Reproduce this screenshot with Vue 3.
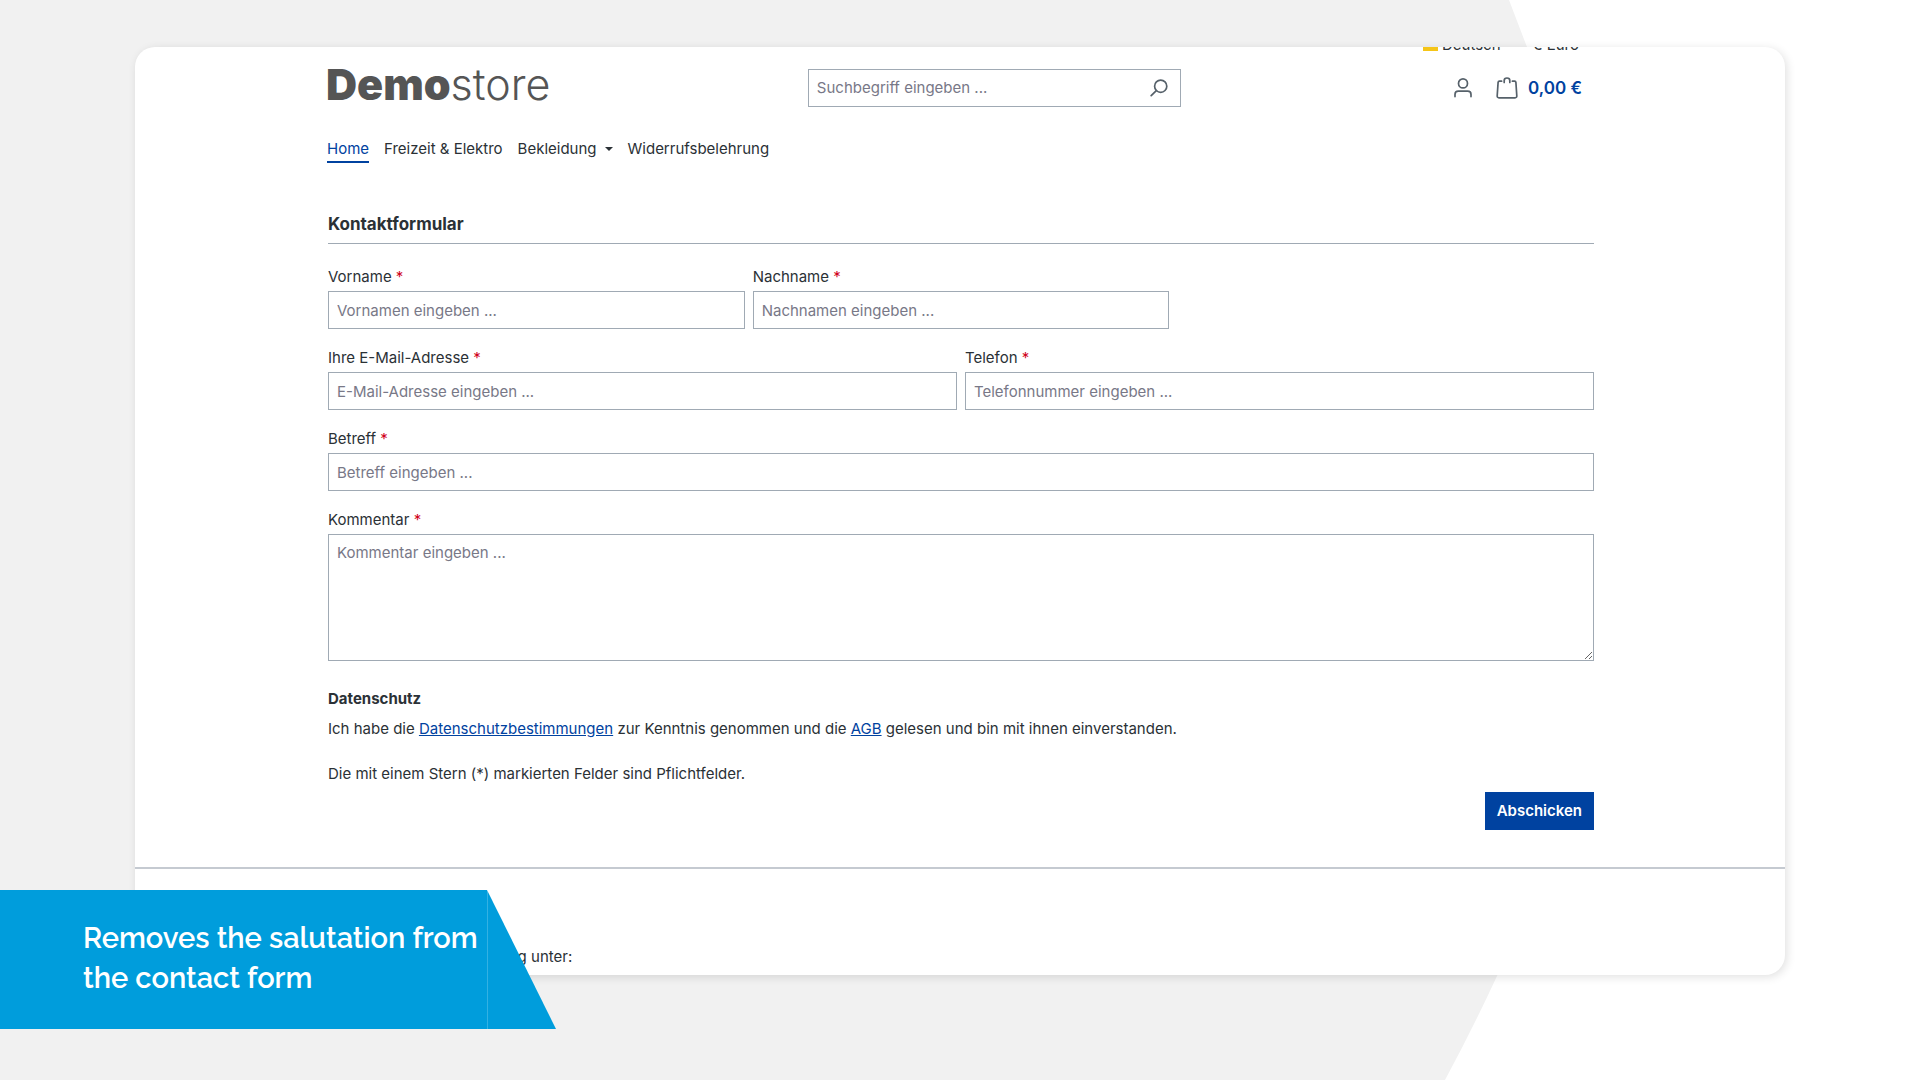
<script setup>
import { reactive } from 'vue';

const navItems = [
    { label: 'Home', active: true },
    { label: 'Freizeit & Elektro' },
    { label: 'Bekleidung', dropdown: true },
    { label: 'Widerrufsbelehrung' }
];

const fields = [
    { id: 'vorname', label: 'Vorname', type: 'text', size: 'third', placeholder: 'Vornamen eingeben ...' },
    { id: 'nachname', label: 'Nachname', type: 'text', size: 'third', placeholder: 'Nachnamen eingeben ...' },
    { id: 'email', label: 'Ihre E-Mail-Adresse', type: 'email', size: 'half', placeholder: 'E-Mail-Adresse eingeben ...' },
    { id: 'telefon', label: 'Telefon', type: 'tel', size: 'half', placeholder: 'Telefonnummer eingeben ...' },
    { id: 'betreff', label: 'Betreff', type: 'text', size: 'full', placeholder: 'Betreff eingeben ...' }
];

const form = reactive({
    vorname: '',
    nachname: '',
    email: '',
    telefon: '',
    betreff: '',
    kommentar: '',
    suche: ''
});
</script>

<template>
    <div class="page">
        <svg class="backdrop" viewBox="0 0 1920 1080" preserveAspectRatio="none" aria-hidden="true">
            <path d="M0 0H1509L1527 47L1620 300Q1680 480 1620 700Q1570 830 1497 976Q1473 1028 1445 1080H0Z" fill="#f1f1f1" />
        </svg>

        <div class="shop">
            <div class="container">
                <div class="top-bar">
                    <button type="button" class="top-bar-btn"><span class="flag"></span>Deutsch</button>
                    <button type="button" class="top-bar-btn">€ Euro</button>
                </div>

                <header class="header">
                    <a href="#" class="logo"><strong>Demo</strong>store</a>
                    <form class="search" @submit.prevent>
                        <input v-model="form.suche" type="search" aria-label="Suchbegriff" placeholder="Suchbegriff eingeben ...">
                        <button type="submit" aria-label="Suchen">
                            <svg width="18" height="18" viewBox="0 0 18 18" fill="none" stroke="#56616a" stroke-width="1.7" stroke-linecap="round">
                                <circle cx="10.7" cy="7.2" r="6.1" />
                                <path d="M6.3 11.6L1.2 16.7" />
                            </svg>
                        </button>
                    </form>
                    <div class="actions">
                        <button type="button" aria-label="Ihr Konto">
                            <svg width="18" height="20" viewBox="0 0 18 20" fill="none" stroke="#56616a" stroke-width="1.7" stroke-linecap="round">
                                <circle cx="9" cy="5.4" r="4.5" />
                                <path d="M1 18.6V16.4C1 14.4 2.4 13.2 4.4 13.2H13.6C15.6 13.2 17 14.4 17 16.4V18.6" />
                            </svg>
                        </button>
                        <a href="#" class="cart">
                            <svg width="22" height="22" viewBox="0 0 22 22" fill="none" stroke="#56616a" stroke-width="1.7" stroke-linecap="round" stroke-linejoin="round">
                                <path d="M5.6 4.2H3.4Q2.2 4.2 2.1 5.4L1.2 18.8Q1.1 20.8 3 20.8H19Q20.9 20.8 20.8 18.8L19.9 5.4Q19.8 4.2 18.6 4.2H16.4" />
                                <path d="M8.2 5.4V3.4Q8.2 1 11 1Q13.8 1 13.8 3.4V5.4" />
                            </svg>
                            <span>0,00 €</span>
                        </a>
                    </div>
                </header>

                <nav class="nav">
                    <a v-for="item in navItems" :key="item.label" href="#" :class="{ active: item.active }">
                        {{ item.label }}<span v-if="item.dropdown" class="caret"></span>
                    </a>
                </nav>

                <form class="contact" @submit.prevent>
                    <h1>Kontaktformular</h1>

                    <div class="fields">
                        <div v-for="field in fields" :key="field.id" class="field" :class="field.size">
                            <label :for="field.id">{{ field.label }} <span class="required">*</span></label>
                            <input :id="field.id" v-model="form[field.id]" :type="field.type" :placeholder="field.placeholder">
                        </div>
                        <div class="field full">
                            <label for="kommentar">Kommentar <span class="required">*</span></label>
                            <textarea id="kommentar" v-model="form.kommentar" placeholder="Kommentar eingeben ..."></textarea>
                        </div>
                    </div>

                    <h2>Datenschutz</h2>
                    <p>
                        Ich habe die <a href="#">Datenschutzbestimmungen</a> zur Kenntnis genommen und die
                        <a href="#">AGB</a> gelesen und bin mit ihnen einverstanden.
                    </p>
                    <p class="hint">Die mit einem Stern (*) markierten Felder sind Pflichtfelder.</p>
                    <div class="submit-row">
                        <button type="submit" class="btn-submit">Abschicken</button>
                    </div>
                </form>
            </div>

            <footer class="footer">
                <div class="container">Unterstützung und Beratung unter:</div>
            </footer>
        </div>

        <div class="banner">
            <p>Removes the salutation from<br>the contact form</p>
            <div class="banner-tip"></div>
        </div>
    </div>
</template>

<style>
body {
    margin: 0;
    background: #fff;
}
</style>

<style scoped>
.page {
    position: relative;
    box-sizing: border-box;
    min-height: 100vh;
    padding: 47px 135px 104px;
    overflow: hidden;
    font-family: Inter, "Liberation Sans", sans-serif;
    font-size: 15px;
    line-height: 24px;
    color: #2b3136;
}

.backdrop {
    position: absolute;
    inset: 0;
    width: 100%;
    height: 100%;
}

.shop {
    position: relative;
    overflow: hidden;
    border-radius: 20px;
    background: #fff;
    box-shadow: 2px 2px 10px rgba(0, 0, 0, 0.12);
}

.container {
    max-width: 1268px;
    margin: 0 auto;
}

button {
    padding: 0;
    border: none;
    background: none;
    font: inherit;
    color: inherit;
    cursor: pointer;
}

/* the shop is scrolled a little, so the top bar is cut off */
.top-bar {
    display: flex;
    justify-content: flex-end;
    gap: 32px;
    margin-top: -14px;
    padding-right: 15px;
}
.top-bar-btn {
    display: flex;
    align-items: center;
    gap: 4px;
    height: 24px;
}
.flag {
    width: 15px;
    height: 11px;
    background: linear-gradient(#000 33%, #d00 33%, #d00 66%, #f5c518 66%);
}

.header {
    display: grid;
    grid-template-columns: 38% 373px 1fr;
    align-items: center;
    height: 62px;
}

.logo {
    font-size: 43px;
    line-height: 56px;
    margin-top: -8px;
    font-weight: 300;
    color: #555;
    text-decoration: none;
}
.logo strong {
    font-weight: 900;
}

.search {
    display: flex;
    box-sizing: border-box;
    height: 38px;
    border: 1px solid #a0aab4;
}
.search input {
    flex: 1;
    min-width: 0;
    padding: 0 8px;
    border: none;
    outline: none;
    font: inherit;
}
.search button {
    display: flex;
    align-items: center;
    padding: 0 12px;
}

.actions {
    display: flex;
    justify-content: flex-end;
    align-items: center;
    gap: 24px;
    padding-right: 12px;
}
.actions button,
.cart {
    display: flex;
    align-items: center;
    gap: 10px;
}
.cart {
    font-size: 17px;
    font-weight: 600;
    color: #0042a0;
    text-decoration: none;
}

.nav {
    display: flex;
    gap: 15px;
    margin-top: 18px;
    padding-left: 1px;
}
.nav a {
    display: flex;
    align-items: center;
    height: 24px;
    border-bottom: 2px solid transparent;
    color: #2b3136;
    text-decoration: none;
}
.nav a.active {
    color: #0042a0;
    border-color: #0042a0;
}
.caret {
    margin-left: 8px;
    border: 4px solid transparent;
    border-top-color: #2b3136;
    border-bottom: none;
}

.contact {
    padding-left: 2px;
}

h1 {
    margin: 49px 0 21px;
    padding-bottom: 7px;
    border-bottom: 1px solid #a0aab4;
    font-size: 17px;
    line-height: 24px;
    font-weight: 700;
}

.fields {
    display: grid;
    grid-template-columns: repeat(6, 1fr);
    gap: 17px 8px;
}
.field {
    display: flex;
    flex-direction: column;
    gap: 2px;
}
.field.third {
    grid-column: span 2;
}
.field.half {
    grid-column: span 3;
}
.field.full {
    grid-column: span 6;
}
.field input,
.field textarea {
    box-sizing: border-box;
    width: 100%;
    height: 38px;
    padding: 6px 8px;
    border: 1px solid #a0aab4;
    border-radius: 0;
    background: #fff;
    color: #2b3136;
    font: inherit;
    outline: none;
}
.field textarea {
    height: 127px;
    resize: vertical;
}
.field input:focus,
.field textarea:focus {
    border-color: #0042a0;
}
input::placeholder,
textarea::placeholder {
    color: #787887;
    opacity: 1;
}
.required {
    color: #d0021b;
}

h2 {
    margin: 26px 0 6px;
    font-size: 15px;
    line-height: 24px;
    font-weight: 700;
}
p {
    margin: 0;
}
p a {
    color: #0042a0;
}
.hint {
    margin-top: 21px;
}
.submit-row {
    display: flex;
    justify-content: flex-end;
    margin-top: 6px;
}
.btn-submit {
    height: 38px;
    padding: 0 12px;
    background: #0042a0;
    color: #fff;
    font-weight: 600;
}

.footer {
    margin-top: 37px;
    padding: 76px 0 6px;
    border-top: 2px solid #c5cad1;
}

.banner {
    position: absolute;
    left: 0;
    bottom: 51px;
    display: flex;
    height: 139px;
}
.banner p {
    box-sizing: border-box;
    width: 487px;
    padding: 28px 0 0 83px;
    background: #009ddc;
    color: #fff;
    font-family: Raleway, Lato, "Open Sans", sans-serif;
    font-size: 29px;
    line-height: 40px;
    font-weight: 600;
    white-space: nowrap;
}
.banner-tip {
    width: 69px;
    background: linear-gradient(90deg, #33b1e3 1px, #009ddc 1px);
    clip-path: polygon(0 0, 100% 100%, 0 100%);
}
</style>
